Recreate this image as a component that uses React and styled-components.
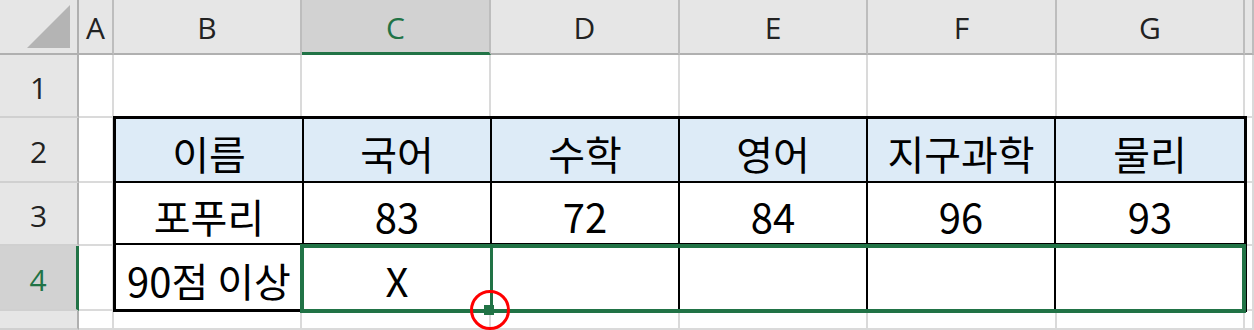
import React from 'react';
import styled, { createGlobalStyle } from 'styled-components';

const GlobalStyle = createGlobalStyle`
  * { box-sizing: border-box; }
  body {
    margin: 0;
    background: #fff;
  }
`;

const green = '#217346';

const Sheet = styled.div`
  display: grid;
  grid-template-columns: 79px 35px 188px 189px 189px 188px 189px 188px 1fr;
  grid-template-rows: 55px 63px 65px 63px 65px 1fr;
  width: 1254px;
  height: 330px;
  overflow: hidden;
  font-family: "Noto Sans CJK KR", "Noto Sans", sans-serif;
`;

const Corner = styled.div`
  display: flex;
  align-items: flex-end;
  justify-content: flex-end;
  padding: 0 7px 5px 0;
  background: #e6e6e6;
  border-right: 2px solid #b0b0b0;
  border-bottom: 2px solid #b0b0b0;
`;

const ColHead = styled.div`
  display: flex;
  align-items: center;
  justify-content: center;
  padding-top: 2px;
  background: ${(p) => (p.$sel ? '#d2d2d2' : '#e6e6e6')};
  color: ${(p) => (p.$sel ? green : '#222')};
  font-family: "Open Sans", "Liberation Sans", sans-serif;
  font-size: 30px;
  border-right: 2px solid #bdbdbd;
  border-bottom: ${(p) => (p.$sel ? `3px solid ${green}` : '2px solid #b0b0b0')};
`;

const RowHead = styled.div`
  grid-column: 1;
  display: flex;
  align-items: center;
  justify-content: center;
  padding-top: 4px;
  background: ${(p) => (p.$sel ? '#d2d2d2' : '#e6e6e6')};
  color: ${(p) => (p.$sel ? green : '#222')};
  font-family: "Open Sans", "Liberation Sans", sans-serif;
  font-size: 30px;
  border-right: ${(p) => (p.$sel ? `3px solid ${green}` : '2px solid #b0b0b0')};
  border-bottom: 2px solid #d0d0d0;
`;

const Cell = styled.div`
  background: #fff;
  border-right: 2px solid #dadada;
  border-bottom: 2px solid #dadada;
`;

const Table = styled.div`
  grid-column: 3 / 9;
  grid-row: 3 / 6;
  margin: -2px -2px -1px -1px;
  z-index: 1;
  display: grid;
  grid-template-columns: repeat(6, 1fr);
  grid-template-rows: 65fr 63fr 65fr;
  border: 3px solid #000;
  background: #fff;
`;

const TCell = styled.div`
  display: flex;
  align-items: center;
  justify-content: center;
  padding-top: 6px;
  font-size: 40px;
  line-height: 1;
  color: #000;
  white-space: nowrap;
  background: ${(p) => (p.$head ? '#ddebf7' : '#fff')};
  border-right: 2px solid #000;
  border-bottom: 2px solid #000;

  &:nth-child(6n) { border-right: none; }
  &:nth-last-child(-n + 6) { border-bottom: none; }
`;

const Selection = styled.div`
  grid-column: 4 / 9;
  grid-row: 5;
  margin: -2px -1px -2px -2px;
  z-index: 2;
  display: grid;
  grid-template-columns: 189px 1fr;
  border: 4px solid ${green};
  pointer-events: none;
`;

const ActiveCell = styled.div`
  position: relative;
  border-right: 3px solid ${green};
`;

const FillHandle = styled.div`
  position: absolute;
  right: -4px;
  bottom: -6px;
  width: 10px;
  height: 10px;
  background: ${green};
`;

const Marker = styled.div`
  position: absolute;
  right: -20px;
  bottom: -21px;
  width: 40px;
  height: 40px;
  border: 3px solid #ff0000;
  border-radius: 50%;
`;

const columns = ['A', 'B', 'C', 'D', 'E', 'F', 'G', ''];
const heads = ['이름', '국어', '수학', '영어', '지구과학', '물리'];
const scores = ['포푸리', '83', '72', '84', '96', '93'];
const passed = ['90점 이상', 'X', '', '', '', ''];

export default function App() {
  return (
    <>
      <GlobalStyle />
      <Sheet>
        <Corner>
          <svg width="43" height="43" viewBox="0 0 43 43">
            <polygon points="43,0 43,43 0,43" fill="#b4b4b4" />
          </svg>
        </Corner>
        {columns.map((c) => (
          <ColHead key={c || 'H'} $sel={c === 'C'}>
            {c}
          </ColHead>
        ))}

        {[1, 2, 3, 4, 5].map((r) => (
          <React.Fragment key={r}>
            <RowHead $sel={r === 4}>{r < 5 ? r : ''}</RowHead>
            <Cell />
            {(r === 1 || r === 5) &&
              [0, 1, 2, 3, 4, 5].map((i) => <Cell key={i} />)}
            <Cell />
          </React.Fragment>
        ))}

        <Table>
          {heads.map((t) => (
            <TCell key={t} $head>
              {t}
            </TCell>
          ))}
          {scores.map((t, i) => (
            <TCell key={'s' + i}>{t}</TCell>
          ))}
          {passed.map((t, i) => (
            <TCell key={'p' + i}>{t}</TCell>
          ))}
        </Table>

        <Selection>
          <ActiveCell>
            <FillHandle />
            <Marker />
          </ActiveCell>
          <div />
        </Selection>
      </Sheet>
    </>
  );
}
